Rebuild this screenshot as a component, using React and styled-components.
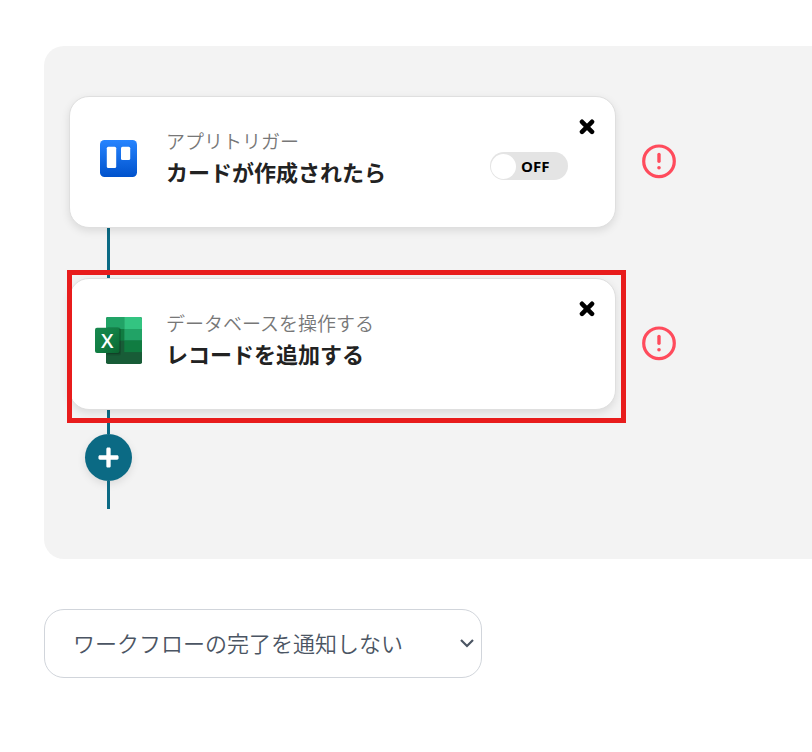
import React, { useState } from 'react';
import styled, { createGlobalStyle } from 'styled-components';
import { FaPlus } from 'react-icons/fa';

const teal = '#0b6a84';
const danger = '#ff4b5c';
const highlight = '#e81c1c';

const GlobalStyle = createGlobalStyle`
  * {
    box-sizing: border-box;
  }

  body {
    margin: 0;
    background: #fff;
    color: #222;
    font-family: "Open Sans", "Noto Sans CJK JP", sans-serif;
  }
`;

const Page = styled.main`
  display: flex;
  flex-direction: column;
  align-items: flex-start;
  gap: 50px;
  padding: 46px 0 50px 44px;
`;

const Canvas = styled.section`
  width: 100%;
  padding: 50px 25px;
  background: #f3f3f3;
  border-radius: 20px 0 0 20px;
`;

const StepRow = styled.div`
  display: flex;
  align-items: center;
  gap: 25px;
`;

const CardWrap = styled.div`
  position: relative;
  flex: 0 1 547px;
`;

// Drawn over the card and the connectors
const Highlight = styled.div`
  position: absolute;
  inset: -8px -10px -13px -2px;
  border: 5px solid ${highlight};
  pointer-events: none;
  z-index: 1;
`;

const Card = styled.article`
  display: flex;
  align-items: flex-start;
  min-height: 132px;
  padding: 18px 16px 18px 25px;
  background: #fff;
  border: 1px solid #dfdfdf;
  border-radius: 20px;
  box-shadow: 0 3px 8px rgba(0, 0, 0, 0.1);
`;

const IconBox = styled.div`
  display: flex;
  align-items: center;
  justify-content: center;
  width: 47px;
  height: 47px;
  margin-top: 20px;
`;

const CardText = styled.div`
  flex: 1;
  min-width: 0;
  margin: 10px 0 0 24px;
`;

const Kind = styled.p`
  margin: 0;
  font-family: "Noto Sans CJK JP", sans-serif;
  font-size: 19px;
  font-weight: 350;
  line-height: 31px;
  color: #777;
`;

const Title = styled.h2`
  margin: 0;
  font-family: "Noto Sans CJK JP", sans-serif;
  font-size: 22px;
  font-weight: 700;
  line-height: 31px;
  color: #222;
`;

const Switch = styled.label`
  position: relative;
  display: flex;
  align-items: center;
  gap: 5px;
  width: 78px;
  height: 28px;
  margin: 37px 7px 0 0;
  padding: 0 1px;
  flex-direction: ${props => (props.$on ? 'row-reverse' : 'row')};
  background: ${props => (props.$on ? '#9fd3df' : '#e4e4e4')};
  border-radius: 14px;
  cursor: pointer;
`;

const SwitchInput = styled.input`
  position: absolute;
  inset: 0;
  width: 100%;
  height: 100%;
  margin: 0;
  opacity: 0;
  cursor: pointer;
`;

const Knob = styled.span`
  width: 25px;
  height: 25px;
  background: #fff;
  border-radius: 50%;
`;

const SwitchText = styled.span`
  font-size: 15px;
  font-weight: 700;
  line-height: 28px;
  color: #000;
`;

const CloseButton = styled.button`
  display: flex;
  align-items: center;
  justify-content: center;
  width: 24px;
  height: 24px;
  padding: 0;
  border: none;
  background: none;
  color: #000;
  cursor: pointer;
`;

const Connector = styled.div`
  width: 3px;
  height: ${props => props.$length}px;
  margin-left: 38px;
  background: ${teal};
`;

const AddButton = styled.button`
  display: flex;
  align-items: center;
  justify-content: center;
  width: 47px;
  height: 47px;
  margin-left: 16px;
  padding: 0;
  border: none;
  border-radius: 50%;
  background: ${teal};
  color: #fff;
  font-size: 23px;
  box-shadow: 0 3px 8px rgba(0, 0, 0, 0.1);
  cursor: pointer;
`;

const SelectWrap = styled.div`
  position: relative;
  width: 100%;
  max-width: 438px;
`;

const Select = styled.select`
  display: block;
  width: 100%;
  height: 69px;
  padding: 0 40px 4px 28px;
  appearance: none;
  background: #fff;
  border: 1px solid #d1d5db;
  border-radius: 20px;
  color: #4b5563;
  font-family: "Noto Sans CJK JP", sans-serif;
  font-size: 22px;
  font-weight: 350;
`;

const Chevron = styled.svg`
  position: absolute;
  top: 30px;
  right: 8px;
  pointer-events: none;
`;

const TrelloIcon = () => (
  <svg width="37" height="37" viewBox="0 0 37 37" aria-hidden="true">
    <defs>
      <linearGradient id="trello" x1="0" y1="0" x2="0" y2="1">
        <stop offset="0" stopColor="#2684ff" />
        <stop offset="1" stopColor="#0052cc" />
      </linearGradient>
    </defs>
    <rect width="37" height="37" rx="4.5" fill="url(#trello)" />
    <rect x="6.8" y="6.8" width="9.4" height="21.3" rx="1.5" fill="#fff" />
    <rect x="21" y="6.8" width="9.2" height="13.2" rx="1.5" fill="#fff" />
  </svg>
);

const ExcelIcon = () => (
  <svg width="47" height="47" viewBox="0 0 47 47" aria-hidden="true">
    <defs>
      <linearGradient id="excel" x1="0" y1="0" x2="1" y2="1">
        <stop offset="0" stopColor="#18884f" />
        <stop offset="0.5" stopColor="#117e43" />
        <stop offset="1" stopColor="#0b6631" />
      </linearGradient>
      <clipPath id="sheet">
        <rect x="11" y="0" width="36" height="47" rx="1.8" />
      </clipPath>
    </defs>
    <g clipPath="url(#sheet)">
      <rect x="11" y="0" width="36" height="47" fill="#185c37" />
      <rect x="11" y="0" width="18.5" height="12" fill="#21a366" />
      <rect x="29.3" y="0" width="18" height="12" fill="#33c481" />
      <rect x="11" y="12" width="18.5" height="11.6" fill="#107c41" />
      <rect x="29.3" y="12" width="18" height="11.6" fill="#21a366" />
      <rect x="29.3" y="23.6" width="18" height="11.5" fill="#107c41" />
      <rect x="11" y="10.5" width="15" height="28" rx="2" fill="#000" opacity="0.12" />
      <rect x="11" y="10.5" width="14.2" height="26.6" rx="2" fill="#000" opacity="0.18" />
    </g>
    <rect x="0" y="10.8" width="24.5" height="25.2" rx="2" fill="url(#excel)" />
    <text
      x="12.2"
      y="30.6"
      textAnchor="middle"
      fontFamily="'Open Sans', sans-serif"
      fontSize="20"
      fontWeight="600"
      fill="#fff"
    >
      X
    </text>
  </svg>
);

const AlertIcon = () => (
  <svg width="36" height="36" viewBox="0 0 36 36" fill="none" stroke={danger} role="img" aria-label="エラー">
    <circle cx="18" cy="17.3" r="15.3" strokeWidth="3.2" />
    <path d="M18 10.5v6.8" strokeWidth="3.4" strokeLinecap="round" />
    <circle cx="18" cy="23.8" r="1.8" fill={danger} stroke="none" />
  </svg>
);

const CloseIcon = () => (
  <svg width="16" height="16" viewBox="0 0 16 16" fill="none" stroke="#000" strokeWidth="4.6" aria-hidden="true">
    <path d="M3 2.8l10 10M13 2.8l-10 10" strokeLinecap="round" />
  </svg>
);

const Step = ({ icon, kind, title, highlighted, children }) => (
  <StepRow>
    <CardWrap>
      <Card>
        <IconBox>{icon}</IconBox>
        <CardText>
          <Kind>{kind}</Kind>
          <Title>{title}</Title>
        </CardText>
        {children}
        <CloseButton type="button" aria-label="削除">
          <CloseIcon />
        </CloseButton>
      </Card>
      {highlighted && <Highlight />}
    </CardWrap>
    <AlertIcon />
  </StepRow>
);

const App = () => {
  const [enabled, setEnabled] = useState(false);

  return (
    <>
      <GlobalStyle />
      <Page lang="ja">
        <Canvas>
          <Step icon={<TrelloIcon />} kind="アプリトリガー" title="カードが作成されたら">
            <Switch $on={enabled}>
              <SwitchInput
                type="checkbox"
                checked={enabled}
                onChange={e => setEnabled(e.target.checked)}
              />
              <Knob />
              <SwitchText>{enabled ? 'ON' : 'OFF'}</SwitchText>
            </Switch>
          </Step>
          <Connector $length={50} />
          <Step
            icon={<ExcelIcon />}
            kind="データベースを操作する"
            title="レコードを追加する"
            highlighted
          />
          <Connector $length={24} />
          <AddButton type="button" aria-label="追加">
            <FaPlus />
          </AddButton>
          <Connector $length={28} />
        </Canvas>
        <SelectWrap>
          <Select aria-label="完了通知" defaultValue="none">
            <option value="none">ワークフローの完了を通知しない</option>
            <option value="notify">ワークフローの完了を通知する</option>
          </Select>
          <Chevron width="14" height="10" viewBox="0 0 14 10" fill="none" stroke="#4b5563" strokeWidth="2.2">
            <path d="M1 1l6 6 6-6" />
          </Chevron>
        </SelectWrap>
      </Page>
    </>
  );
};

export default App;
